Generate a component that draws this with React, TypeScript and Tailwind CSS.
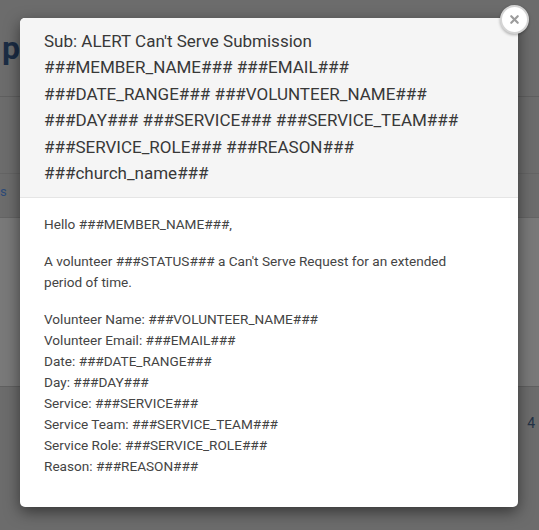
import { X } from 'lucide-react'

const bodyLines = [
  'Volunteer Name: ###VOLUNTEER_NAME###',
  'Volunteer Email: ###EMAIL###',
  'Date: ###DATE_RANGE###',
  'Day: ###DAY###',
  'Service: ###SERVICE###',
  'Service Team: ###SERVICE_TEAM###',
  'Service Role: ###SERVICE_ROLE###',
  'Reason: ###REASON###',
]

export default function App() {
  return (
    <div className="relative h-[530px] w-[539px] overflow-hidden bg-[#6c6c6c] font-['Roboto',sans-serif]">
      {/* dimmed page behind the modal */}
      <div className="flex flex-col">
        <div className="h-[96px] pl-[2px] pt-[28px] text-[32px] font-bold leading-[40px] text-[#1b2c44]">plates</div>
        <div className="h-px bg-[#5f5f5f]" />
        <div className="h-[76px]" />
        <div className="h-px bg-[#646464]" />
        <div className="h-[43px] pt-[8px] text-[13px] text-[#2d4a78]">s</div>
        <div className="h-px bg-[#646464]" />
        <div className="h-[168px] bg-[#797979]" />
        <div className="h-px bg-[#606060]" />
        <div className="flex h-[60px] justify-end pr-[4px] pt-[26px] text-[14px] text-[#243246]">4</div>
      </div>

      {/* modal */}
      <div className="absolute left-[20px] top-[18px] w-[498px] rounded-[5px] bg-white shadow-[0_5px_15px_rgba(0,0,0,0.5)]">
        <div className="rounded-t-[5px] border-b border-[#e5e5e5] bg-[#f5f5f5] px-[24px] pb-[11px] pt-[10px] text-[17px] leading-[26.4px] text-[#383838]">
          <div>Sub: ALERT Can't Serve Submission</div>
          <div>###MEMBER_NAME### ###EMAIL###</div>
          <div>###DATE_RANGE### ###VOLUNTEER_NAME###</div>
          <div>###DAY### ###SERVICE### ###SERVICE_TEAM###</div>
          <div>###SERVICE_ROLE### ###REASON###</div>
          <div>###church_name###</div>
        </div>
        <div className="px-[24px] pb-[14px] pt-[16px] text-[13.6px] leading-[21px] text-[#444]">
          <p className="mb-[16px]">Hello ###MEMBER_NAME###,</p>
          <p className="mb-[16px] max-w-[420px]">A volunteer ###STATUS### a Can't Serve Request for an extended period of time.</p>
          <p className="mb-[16px]">
            {bodyLines.map(line => (
              <span key={line} className="block">{line}</span>
            ))}
          </p>
        </div>
        <button className="absolute right-[-11px] top-[-13px] flex h-[29px] w-[29px] items-center justify-center rounded-full border-2 border-[#d4d4d4] bg-white shadow-[0_1px_3px_rgba(0,0,0,0.3)]">
          <X className="h-[13px] w-[13px] text-[#9c9c9c]" strokeWidth={4} />
        </button>
      </div>
    </div>
  )
}
